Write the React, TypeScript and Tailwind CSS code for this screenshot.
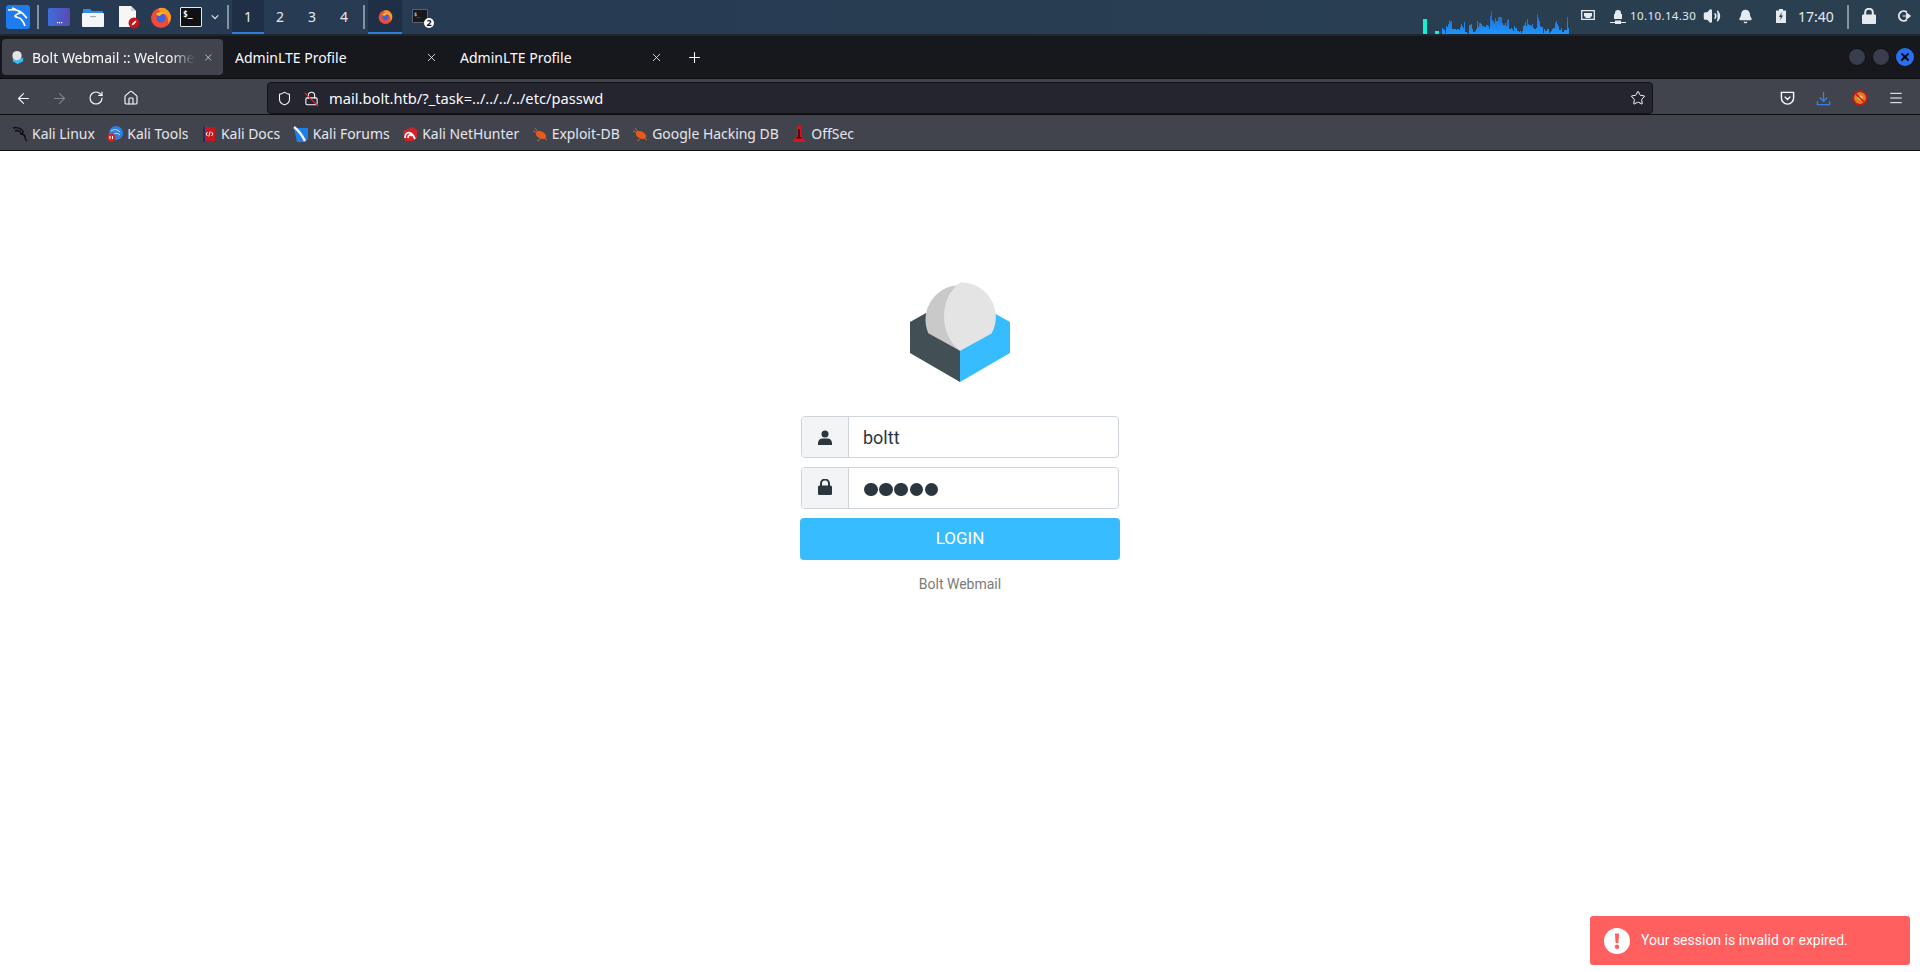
import React from 'react';
import { ArrowLeft, ArrowRight, Bell, Home, Lock, Menu, Plus, RotateCw, Shield, Star, Volume2, X } from 'lucide-react';

// heights of the network meter, read off the panel
const meterBars = [
  6, 5, 4, 1, 8, 7, 10, 14, 12, 13, 5, 5, 5, 5, 4, 5, 5, 4, 7, 10, 8, 6, 12, 2, 2, 1, 0, 9, 9, 10, 5, 2, 2, 3, 5, 13, 7, 11, 11, 10,
  8, 8, 7, 7, 9, 9, 8, 5, 18, 23, 14, 13, 11, 16, 13, 13, 17, 17, 17, 17, 11, 9, 9, 11, 8, 14, 15, 5, 5, 6, 5, 3, 8, 6, 6, 3, 3, 2, 3, 1,
  3, 8, 9, 12, 8, 15, 10, 9, 9, 8, 10, 6, 5, 5, 6, 20, 16, 13, 8, 7, 7, 1, 5, 3, 3, 5, 5, 1, 2, 3, 5, 6, 6, 11, 13, 10, 8, 4, 4, 6,
  2, 2, 4, 4, 4, 17, 6,
];

const bookmarks = [
  { label: 'Kali Linux', icon: 'kali' },
  { label: 'Kali Tools', icon: 'tools' },
  { label: 'Kali Docs', icon: 'docs' },
  { label: 'Kali Forums', icon: 'forums' },
  { label: 'Kali NetHunter', icon: 'nethunter' },
  { label: 'Exploit-DB', icon: 'bug' },
  { label: 'Google Hacking DB', icon: 'bug' },
  { label: 'OffSec', icon: 'offsec' },
];

const BookmarkIcon = ({ name }: { name: string }) => {
  if (name === 'kali') {
    return (
      <svg viewBox="0 0 16 16" className="w-4 h-4 shrink-0">
        <path d="M1 2c4-1 7 0 9 2s1 4-1 4 4 0 4 3 1 3 2 4M3 5c3-1 5 0 6 2" fill="none" stroke="#0a0a0a" strokeWidth="1.4" />
      </svg>
    );
  }
  if (name === 'tools') {
    return (
      <svg viewBox="0 0 16 16" className="w-4 h-4 shrink-0">
        <circle cx="9" cy="7" r="7" fill="#2d7fe0" />
        <path d="M4 5c3-2 6-2 9 1M7 8c2-1 4-1 6 1" fill="none" stroke="#cfe4fa" strokeWidth="1" />
        <circle cx="4.5" cy="11.5" r="4" fill="#d9251d" />
        <path d="M3 10v3M5.5 10v3" stroke="#fff" strokeWidth="1" />
      </svg>
    );
  }
  if (name === 'docs') {
    return (
      <svg viewBox="0 0 16 16" className="w-4 h-4 shrink-0">
        <rect x="3" y="1" width="11" height="14" fill="#c8161c" />
        <rect x="2" y="1" width="2" height="15" fill="#1d2f6b" />
        <path d="M6.5 6 5 8l1.500 2M10.500 6 12 8l-1.500 2M9.200 5.500l-1.400 5" fill="none" stroke="#fff" strokeWidth="1" />
      </svg>
    );
  }
  if (name === 'forums') {
    return (
      <svg viewBox="0 0 16 16" className="w-4 h-4 shrink-0">
        <path d="M1 2h14v11l-3 3H4z" fill="#1f7fe8" />
        <path d="M1 1c4 3 8 8 11 14" fill="none" stroke="#eef3f8" strokeWidth="2.4" />
      </svg>
    );
  }
  if (name === 'nethunter') {
    return (
      <svg viewBox="0 0 16 16" className="w-4 h-4 shrink-0">
        <path d="M1 5 11 1l4 3v8l-4 3H3z" fill="#d2232a" />
        <path d="M3 12c0-6 5-7 8-3l2 4M6 12c0-3 2-4 4-2" fill="none" stroke="#fff" strokeWidth="1.700" />
      </svg>
    );
  }
  if (name === 'bug') {
    return (
      <svg viewBox="0 0 16 16" className="w-4 h-4 shrink-0">
        <ellipse cx="9" cy="9" rx="5.500" ry="3.500" fill="#e8591c" transform="rotate(25 9 9)" />
        <path d="M1 5l5 2M3 2l3 4M8 13l-3 2M12 12l3 2" stroke="#e8591c" strokeWidth="1" />
      </svg>
    );
  }
  return (
    <svg viewBox="0 0 16 16" className="w-4 h-4 shrink-0">
      <path d="M6 0h4v9l4 6v1H2v-1l4-6z" fill="#d9141c" />
      <path d="M7.200 3h1.600v9H7.200zM5.500 11h5v1.500h-5z" fill="#2a0a0c" />
    </svg>
  );
};

const TabLabel = ({ label }: { label: string }) => (
  <div className="w-[221px] h-9 flex items-center pl-2 pr-[10px] shrink-0">
    <span className="flex-1 text-[14px] text-[#fbfbfe] whitespace-nowrap">{label}</span>
    <X size={13} strokeWidth={1.500} className="text-[#fbfbfe]" />
  </div>
);

const Firefox = ({ className }: { className: string }) => (
  <svg viewBox="0 0 22 22" className={className}>
    <circle cx="11" cy="12" r="10" fill="#ef4a3a" />
    <path d="M8 3c5-3 11 0 13 7 0 3-1 6-3 8 1-5-1-9-5-11-2-1-4-2-5-4z" fill="#fb9a23" />
    <circle cx="11" cy="12" r="4.500" fill="#3f63d8" />
    <path d="M6 8c3-3 7-3 10 0-3-1-5 0-6 2-2 0-3-1-4-2z" fill="#fdbb2d" />
  </svg>
);

const Panel = () => (
  <div className="h-9 shrink-0 flex items-center bg-gradient-to-r from-[#263a53] to-[#2a4050] border-b-2 border-[#1e2730] text-[#e6e9ee] font-['Noto_Sans',sans-serif]">
    <div className="w-[34px] h-[34px] flex items-center justify-center">
      <svg viewBox="0 0 24 24" className="w-6 h-6 ml-[1px]">
        <rect width="24" height="24" rx="3" fill="#1e7bf0" />
        <path d="M2 5c6-1 11 0 14 3 3 2 3 4 5 5M6 3c3 1 6 2 8 5-2 1-4 1-5 3 1 2 4 1 6 3 2 2 3 4 4 7" fill="none" stroke="#fff" strokeWidth="1.700" />
      </svg>
    </div>
    <div className="w-[2px] h-6 bg-[#8592a0] ml-[3px] mr-[9px]" />
    <svg viewBox="0 0 22 18" className="w-[22px] h-[18px] mr-[12px]">
      <defs>
        <linearGradient id="launcher" x1="0" x2="1">
          <stop offset="0" stopColor="#3c6fdc" />
          <stop offset="1" stopColor="#5a4ab0" />
        </linearGradient>
      </defs>
      <rect width="22" height="18" rx="1.500" fill="url(#launcher)" />
      <path d="M9 14h1.200v1.200H9zM11 14h1.200v1.200H11zM13 14h1.200v1.200H13z" fill="#fff" />
    </svg>
    <svg viewBox="0 0 22 19" className="w-[22px] h-[19px] mr-[14px]">
      <path d="M1 2a1 1 0 0 1 1-1h6l2 2h10a1 1 0 0 1 1 1v3H1z" fill="#2f8ae8" />
      <rect x="0" y="5" width="22" height="14" rx="1" fill="#f4f5f6" />
      <rect x="8" y="8" width="6" height="1.200" fill="#a9adb3" />
    </svg>
    <svg viewBox="0 0 22 24" className="w-[22px] h-6 mr-[10px]">
      <path d="M1 1h12l5 5v16H1z" fill="#f6f6f6" />
      <path d="M13 1v5h5z" fill="#cfd1d4" />
      <circle cx="16" cy="18" r="5.500" fill="#c3161c" />
      <path d="m13.500 20.500 1-2.500 3-2.500 1 1-2.500 3z" fill="#fff" />
    </svg>
    <Firefox className="w-[22px] h-[22px] mr-2" />
    <div className="w-[22px] h-[20px] bg-[#101114] border border-[#e7e7e7] rounded-[1px] flex items-start px-[2px] pt-[1px] text-[8px] leading-[12px] font-bold text-white font-['DejaVu_Sans_Mono',monospace]">
      $_
    </div>
    <svg viewBox="0 0 10 6" className="w-2 h-[6px] ml-[9px] mr-[8px]">
      <path d="m1 1 4 4 4-4" fill="none" stroke="#e6e9ee" strokeWidth="1.500" />
    </svg>
    <div className="w-[2px] h-6 bg-[#8592a0] mr-[3px]" />
    {['1', '2', '3', '4'].map(n => (
      <div
        key={n}
        className={`w-8 h-[34px] flex items-center justify-center text-[14px] border-b-2 ${n === '1' ? 'bg-[#1f2f45] border-[#2f7fd8]' : 'border-transparent'}`}
      >
        {n}
      </div>
    ))}
    <div className="w-[2px] h-6 bg-[#8592a0] ml-[3px] mr-[3px]" />
    <div className="w-[34px] h-[34px] flex items-center justify-center bg-[#1f2f45] border-b-2 border-[#2f7fd8]">
      <Firefox className="w-[15px] h-[15px]" />
    </div>
    <div className="relative w-4 h-[14px] ml-[10px] mb-[2px] bg-[#16181c] rounded-[1px] border border-[#5a6470] text-[5px] leading-[8px] pl-[1px] text-white font-['DejaVu_Sans_Mono',monospace]">
      $_
      <span className="absolute -right-[7px] -bottom-[6px] w-[10px] h-[10px] rounded-full bg-white text-[#111] text-[9px] leading-[10px] font-bold text-center font-['Noto_Sans',sans-serif]">2</span>
    </div>

    <div className="ml-auto flex items-center h-[34px]">
      <div className="w-1 h-[15px] bg-[#14f0d0] self-end" />
      <div className="w-1 h-[3px] bg-[#14f0d0] self-end ml-2" />
      <svg viewBox="0 0 127 23" className="w-[127px] h-[23px] self-end ml-[3px]">
        <defs>
          <linearGradient id="meter" x1="0" y1="0" x2="0" y2="1">
            <stop offset="0" stopColor="#1e62c0" />
            <stop offset="1" stopColor="#2096ff" />
          </linearGradient>
        </defs>
        <path
          fill="url(#meter)"
          d={meterBars.map((h, i) => `M${i} 23v-${h}h1v${h}z`).join('')}
        />
      </svg>
      <svg viewBox="0 0 14 12" className="w-[14px] h-3 ml-3 mb-[2px]">
        <path d="M.7.7h12.600v8.600H.7z" fill="none" stroke="#e6e9ee" strokeWidth="1.300" />
        <path d="M3 3h8v3.500H9.500V8h-5V6.500H3z" fill="#e6e9ee" />
      </svg>
      <svg viewBox="0 0 16 16" className="w-4 h-4 ml-[15px] mb-[2px]">
        <path d="M5 5a3 3 0 0 1 6 0v1h1v5H4V6h1z" fill="#e6e9ee" />
        <path d="M0 14h5v-1.500h6V14h5v1H11v1H5v-1H0z" fill="#e6e9ee" />
      </svg>
      <span className="text-[11.500px] tracking-[0.4px] ml-1 mb-[2px] w-[68px] whitespace-nowrap">10.10.14.30</span>
      <Volume2 size={18} strokeWidth={2} className="ml-[5px] mb-[2px] fill-[#e6e9ee]" />
      <Bell size={15} strokeWidth={2} className="ml-[17px] mb-[2px] fill-[#e6e9ee]" />
      <svg viewBox="0 0 10 14" className="w-[10px] h-[14px] ml-[23px] mb-[2px]">
        <path d="M3 0h4v1.500h3V14H0V1.500h3z" fill="#e6e9ee" />
        <path d="M5.800 3 3 8h1.800L4 11.500 7 6.500H5.200z" fill="#2a4050" />
      </svg>
      <span className="text-[14px] ml-3 mb-[2px] w-[37px]">17:40</span>
      <div className="w-[2px] h-6 bg-[#8592a0] ml-3" />
      <svg viewBox="0 0 14 16" className="w-[14px] h-4 ml-[13px] mb-[2px]">
        <path d="M3.200 7V4.500a3.800 3.800 0 0 1 7.600 0V7" fill="none" stroke="#e6e9ee" strokeWidth="2" />
        <rect y="6.500" width="14" height="9.500" rx="1" fill="#e6e9ee" />
      </svg>
      <svg viewBox="0 0 16 14" className="w-[15px] h-[14px] ml-[21px] mr-2 mb-[2px]">
        <path d="M10.500 3A5.200 5.200 0 1 0 10.500 11" fill="none" stroke="#e6e9ee" strokeWidth="2" />
        <path d="M6 7h6M10 3.500 14.500 7 10 10.500z" stroke="#e6e9ee" fill="#e6e9ee" strokeWidth="1" />
      </svg>
    </div>
  </div>
);

const Browser = () => (
  <div className="shrink-0 font-['Noto_Sans',sans-serif]">
    <div className="h-[43px] bg-[#17181d] flex items-center pl-[2px] gap-1 border-b border-[#0e0e11]">
      <div className="w-[221px] h-9 rounded-[4px] bg-[#42444d] flex items-center pl-2 pr-[10px] shrink-0">
        <svg viewBox="0 0 16 16" className="w-[15px] h-[15px] mr-[7px] shrink-0">
          <path d="M3 8.500 8 11l6-3v4l-6 3-5-3z" fill="#37bcff" />
          <circle cx="7.500" cy="6" r="5" fill="#e4e4e4" />
        </svg>
        <span className="flex-1 text-[14px] text-[#fbfbfe] whitespace-nowrap [mask-image:linear-gradient(to_right,black_85%,transparent)]">
          Bolt Webmail :: Welcome
        </span>
        <X size={13} strokeWidth={1.500} className="text-[#fbfbfe] ml-2" />
      </div>
      <TabLabel label="AdminLTE Profile" />
      <TabLabel label="AdminLTE Profile" />
      <Plus size={17} strokeWidth={1.500} className="text-[#fbfbfe] ml-[9px]" />
      <div className="ml-auto flex items-center gap-[6px] pr-[6px]">
        <div className="w-[18px] h-[18px] rounded-full bg-[#3a3e4c] border border-[#101114]" />
        <div className="w-[18px] h-[18px] rounded-full bg-[#3a3e4c] border border-[#101114]" />
        <div className="w-[18px] h-[18px] rounded-full bg-[#2a6ff0] flex items-center justify-center">
          <X size={12} strokeWidth={4} className="text-[#0b0c10]" />
        </div>
      </div>
    </div>
    <div className="h-[36px] bg-[#42444d] flex items-center pt-[3px] text-[#fbfbfe] border-b border-[#0e0e11]">
      <ArrowLeft size={17} strokeWidth={1.500} className="ml-[15px]" />
      <ArrowRight size={17} strokeWidth={1.500} className="ml-[19px] text-[#83848b]" />
      <RotateCw size={16} strokeWidth={1.700} className="ml-5" />
      <Home size={16} strokeWidth={1.700} className="ml-[19px]" />
      <div className="ml-[128px] w-[1386px] h-[32px] rounded-[4px] bg-[#24252f] border border-[#121318] flex items-center">
        <Shield size={15} strokeWidth={1.700} className="ml-[9px]" />
        <div className="relative ml-[12px]">
          <Lock size={15} strokeWidth={1.700} />
          <div className="absolute left-[7px] -top-[1px] w-[1px] h-[19px] bg-[#e0303f] -rotate-45" />
        </div>
        <span className="ml-[10px] text-[14.700px]">mail.bolt.htb/?_task=../../../../etc/passwd</span>
        <Star size={16} strokeWidth={1.500} className="ml-auto mr-[6px]" />
      </div>
      <svg viewBox="0 0 16 16" className="w-[15px] h-[15px] ml-[127px]">
        <path d="M1.500 1.500h13v6a6.500 6.500 0 0 1-13 0zM5 6l3 3 3-3" fill="none" stroke="#fbfbfe" strokeWidth="1.500" />
      </svg>
      <svg viewBox="0 0 16 16" className="w-[15px] h-[15px] ml-[21px]">
        <path d="M8 1v10M4 7l4 4 4-4M1.500 11v3.500h13V11" fill="none" stroke="#3a7fe8" strokeWidth="1.400" />
      </svg>
      <svg viewBox="0 0 16 16" className="w-4 h-4 ml-[21px]">
        <circle cx="8" cy="8" r="6" fill="#e07b20" />
        <path d="M5 8l3-3 3 2-2 4z" fill="#f7c46c" />
        <circle cx="8" cy="8" r="7" fill="none" stroke="#c9161c" strokeWidth="1.500" />
        <path d="m3 3 10 10" stroke="#c9161c" strokeWidth="1.500" />
      </svg>
      <Menu size={16} strokeWidth={1.500} className="ml-[20px]" />
    </div>
    <div className="h-[36px] bg-[#42444d] flex items-center pt-[3px] pl-3 gap-[12.500px] border-b border-[#0e0e11]">
      {bookmarks.map(b => (
        <div key={b.label} className="flex items-center gap-1">
          <BookmarkIcon name={b.icon} />
          <span className="text-[13.950px] text-[#e6e7ec] whitespace-nowrap">{b.label}</span>
        </div>
      ))}
    </div>
  </div>
);

const App: React.FC = () => {
  return (
    <div className="relative h-[972px] overflow-hidden flex flex-col bg-white">
      <Panel />
      <Browser />
      <main className="flex-1 flex flex-col items-center pt-[131px] font-['Roboto',sans-serif]">
        <svg viewBox="0 0 100 100" className="w-[100px] h-[100px]">
          <path d="M0 40 16 31 50 60V100L0 71z" fill="#425056" />
          <path d="M100 40 84 31 50 60V100L100 71z" fill="#37bcff" />
          <path d="M50 68.700 18.300 51.300A34.500 34.500 0 1 1 81.700 51.300z" fill="#c9c9c9" />
          <path d="M50 68.700C39 60 34 48 34 34 34 20 40 8 50 .5A34.500 34.500 0 0 1 81.700 51.300z" fill="#e4e4e4" />
        </svg>
        <form className="w-[320px] mt-[34px] flex flex-col">
          <div className="mx-[1px] h-[42px] flex border border-[#ced4da] rounded-[4px] overflow-hidden">
            <div className="w-[47px] bg-[#f3f4f6] border-r border-[#ced4da] flex items-center justify-center">
              <svg viewBox="0 0 14 15" className="w-[14px] h-[15px]">
                <circle cx="7" cy="4" r="3.500" fill="#2c363f" />
                <path d="M0 15v-2a4.500 4.500 0 0 1 4.500-4.500h5A4.500 4.500 0 0 1 14 13v2z" fill="#2c363f" />
              </svg>
            </div>
            <div className="flex-1 flex items-center pl-[14px] text-[18px] text-[#2c363f]">boltt</div>
          </div>
          <div className="mx-[1px] mt-[9px] h-[42px] flex border border-[#ced4da] rounded-[4px] overflow-hidden">
            <div className="w-[47px] bg-[#f3f4f6] border-r border-[#ced4da] flex items-center justify-center">
              <svg viewBox="0 0 14 16" className="w-[14px] h-4 mb-[3px]">
                <path d="M3 7V4.500a4 4 0 0 1 8 0V7" fill="none" stroke="#2c363f" strokeWidth="2" />
                <rect y="6.500" width="14" height="9.500" rx="1.500" fill="#2c363f" />
              </svg>
            </div>
            <div className="flex-1 flex items-center pl-[15px] gap-[1.500px] pt-[3px]">
              {[0, 1, 2, 3, 4].map(i => (
                <span key={i} className="w-[13.700px] h-[13.700px] rounded-full bg-[#2c363f]" />
              ))}
            </div>
          </div>
          <button type="button" className="mt-[9px] h-[42px] rounded-[4px] bg-[#37bcff] text-white text-[17px] uppercase">
            Login
          </button>
          <p className="mt-[14px] text-center text-[14px] leading-[20px] text-[#7b7b7b]">Bolt Webmail</p>
        </form>
      </main>
      <div className="absolute left-[1590px] top-[916px] w-[320px] h-[49px] rounded-[3px] bg-[#ff5f5f] flex items-center pl-[14px] text-white font-['Roboto',sans-serif]">
        <svg viewBox="0 0 26 26" className="w-[26px] h-[26px] shrink-0">
          <circle cx="13" cy="13" r="13" fill="#fff" />
          <path d="M11 5.500h4l-.6 9.500h-2.800z" fill="#ff5f5f" />
          <circle cx="13" cy="18.800" r="2.200" fill="#ff5f5f" />
        </svg>
        <span className="ml-[11px] text-[14px]">Your session is invalid or expired.</span>
      </div>
    </div>
  );
};

export default App;
